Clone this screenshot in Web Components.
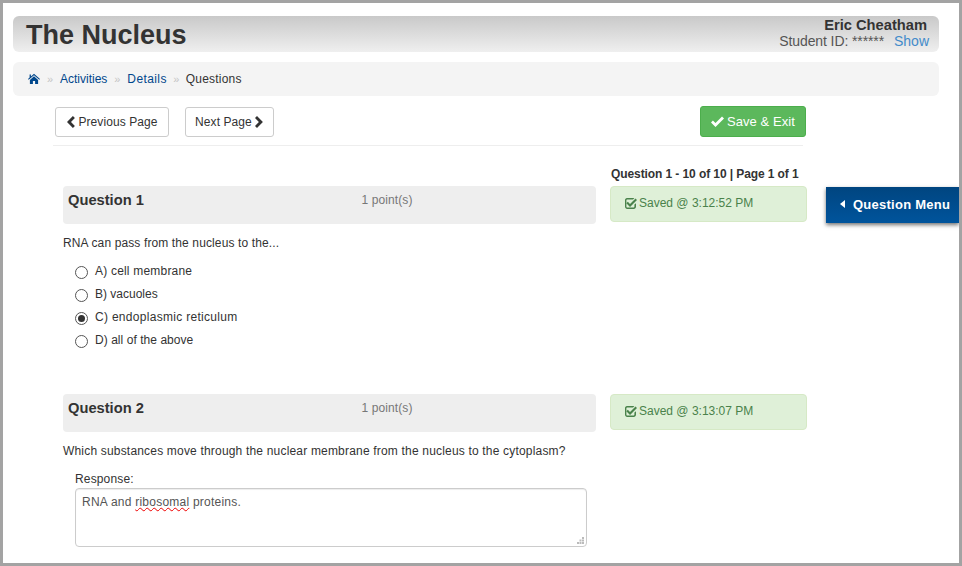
<!DOCTYPE html>
<html lang="en"><head><meta charset="utf-8"><title>The Nucleus</title>
<style>
html,body{margin:0;padding:0;background:#fff}
body{font:12px/17px "Liberation Sans",Arial,sans-serif;color:#333}
</style></head><body>
<x-frame>
  <x-header title="The Nucleus" name="Eric Cheatham" sid="******"></x-header>
  <x-crumbs></x-crumbs>
  <x-toolbar></x-toolbar>
  <x-pageinfo>Question 1 - 10 of 10 | Page 1 of 1</x-pageinfo>
  <x-question num="1" saved="3:12:52 PM" ls=".12" text="RNA can pass from the nucleus to the...">
    <x-option style="letter-spacing:.2px">A) cell membrane</x-option>
    <x-option>B) vacuoles</x-option>
    <x-option checked style="letter-spacing:.3px">C) endoplasmic reticulum</x-option>
    <x-option style="letter-spacing:.05px">D) all of the above</x-option>
  </x-question>
  <x-question num="2" saved="3:13:07 PM" ls=".185" text="Which substances move through the nuclear membrane from the nucleus to the cytoplasm?">
    <x-response></x-response>
  </x-question>
  <x-menutab>Question Menu</x-menutab>
</x-frame>
<script>
const ICONS={
 home:'<path d="M6 .8 2.9 3.5V1.6H1.6v3L0 6l.7.8L6 2.2l5.3 4.6L12 6zM1.9 6.9V11h3V7.9h2.2V11h3V6.9L6 3.3z"/>',
 left:'<path d="M6.9 0 8.9 2 5 6l3.9 4-2 2L1 6z"/>',
 right:'<path d="M3 0 1 2l3.9 4L1 10l2 2 5.9-6z"/>',
 ok:'<path d="M1.9 4.6 0 6.6l4.500 4.300L13 2.500 11 .6 4.500 7z"/>',
 check:'<path d="M2 1h7.400l-1.400 1.400H2.400c-.6 0-1 .4-1 1v6c0 .6.4 1 1 1h6c.6 0 1-.4 1-1V7.600L11 6.200v3.600c0 1.200-1 2.200-2.200 2.200H2.200C1 12 0 11 0 9.800V3.200C0 2 .8 1 2 1z"/><path d="M2.800 4.800 1.300 6.300l3.700 3.700 7-7-1.500-1.500L5 7z"/>'
};
function def(name,css,html){
  customElements.define(name,class extends HTMLElement{
    connectedCallback(){
      if(this.shadowRoot)return;
      const r=this.attachShadow({mode:'open'});
      const h=typeof html==='function'?html(this):html;
      r.innerHTML='<style>'+css+'</style>'+h;
    }
  });
}
def('x-icon',':host{display:inline-flex;vertical-align:middle}svg{display:block;fill:currentColor}',
 e=>{const w=e.getAttribute('w')||12,h=e.getAttribute('h')||12,vw=e.getAttribute('vw')||12;
  return `<svg width="${w}" height="${h}" viewBox="0 0 ${vw} 12">${ICONS[e.getAttribute('name')]}</svg>`});
def('x-frame',`:host{display:block;box-sizing:border-box;width:962px;height:566px;border:3px solid #a3a3a3;position:relative;overflow:hidden;padding:13px 20px 0 10px}`,'<slot></slot>');
def('x-header',`:host{display:flex;justify-content:space-between;height:36px;border-radius:6px;background:linear-gradient(#c9c9c9,#efefef);box-sizing:border-box;padding:0 10px 0 13px;color:#333}
 h1{margin:0;font:bold 27px/38px "Liberation Sans",sans-serif}
 .r{text-align:right;font-size:14px;line-height:16px;padding-top:1px}
 b{display:block;padding-right:2px;font-size:14.700px}
 .id{color:#555;letter-spacing:-.1px}a{color:#428bca;margin-left:6px}`,
 e=>`<h1>${e.getAttribute('title')}</h1><div class="r"><b>${e.getAttribute('name')}</b><span class="id">Student ID: ${e.getAttribute('sid')}</span> <a>Show</a></div>`);
def('x-crumbs',`:host{display:flex;align-items:center;height:34px;margin-top:10px;background:#f4f4f4;border-radius:6px;padding:0 15px;color:#333;font-size:12px}
 a{color:#00478c}.sep{color:#c4c4c4;text-align:center;font-size:11px;width:20px}.s3{width:19px}
 .d{letter-spacing:.4px}.q{letter-spacing:.2px}
 x-icon{color:#00478c}`,
 `<x-icon name="home"></x-icon><span class="sep">»</span><a>Activities</a><span class="sep">»</span><a class="d">Details</a><span class="sep s3">»</span><span class="q">Questions</span>`);
def('x-btn',`:host{display:inline-flex;align-items:center;justify-content:center;box-sizing:border-box;height:30px;border:1px solid #ccc;border-radius:3px;background:#fff;color:#333;font-size:12px;gap:2px;letter-spacing:.08px}
 :host([success]){height:31px;background:#5cb85c;border-color:#4cae4c;color:#fff;font-size:13px;gap:3px}`,'<slot></slot>');
def('x-toolbar',`:host{display:flex;align-items:flex-end;box-sizing:border-box;border-bottom:1px solid #eee;margin:0 0 0 40px;padding:0 0 8px 2px;width:750px;height:50px}
 x-btn.p{width:114px}x-btn.n{width:89px;margin-left:16px}x-btn.s{width:106px;margin-left:auto;margin-right:-3px}`,
 `<x-btn class="p"><x-icon name="left" w="10" vw="10"></x-icon>Previous Page</x-btn><x-btn class="n">Next Page<x-icon name="right" w="10" vw="10"></x-icon></x-btn><x-btn class="s" success><x-icon name="ok" w="13" vw="13"></x-icon>Save &amp; Exit</x-btn>`);
def('x-pageinfo',`:host{display:block;font-weight:bold;font-size:12px;line-height:17px;margin:20px 0 0 598px;height:20px;white-space:nowrap;letter-spacing:-.09px}`,'<slot></slot>');
def('x-question',`:host{display:grid;grid-template-columns:533px 197px;column-gap:14px;margin-left:50px;height:208px;align-content:start}
 .bar{height:38px;background:#eee;border-radius:4px;display:grid;grid-template-columns:1fr 1fr;padding:0 5px;box-sizing:border-box}
 .bar b{font-size:14.700px;line-height:28px;color:#333}
 .bar span{color:#777;line-height:28px;padding-left:32px;letter-spacing:.1px}
 .saved{height:36px;box-sizing:border-box;background:#dff0d8;border:1px solid #d6e9c6;border-radius:4px;color:#4a824b;padding:8px 14px;display:flex;gap:2px;align-items:flex-start;white-space:nowrap}
 .saved x-icon{margin-top:2px}
 .body{grid-column:1/3}
 p{margin:11px 0 8px;line-height:17px}
 .opts{display:flex;flex-direction:column;padding-left:12px}`,
 e=>`<div class="bar"><b>Question ${e.getAttribute('num')}</b><span>1 point(s)</span></div>
 <div class="saved"><x-icon name="check" w="12" vw="12"></x-icon>Saved @ ${e.getAttribute('saved')}</div>
 <div class="body"><p style="letter-spacing:${e.getAttribute('ls')}px">${e.getAttribute('text')}</p><div class="opts"><slot></slot></div></div>`);
def('x-option',`:host{display:flex;align-items:center;height:23px;gap:7px}
 i{display:block;width:13px;height:13px;box-sizing:border-box;border:1px solid #555;border-radius:50%;margin-top:2px;background:#fff;position:relative}
 :host([checked]) i::after{content:"";position:absolute;left:2px;top:2px;width:7px;height:7px;border-radius:50%;background:#333}
 span{margin-top:-1px}`,`<i></i><span><slot></slot></span>`);
def('x-response',`:host{display:block}
 label{display:block;line-height:17px;margin-top:3px;letter-spacing:.15px}
 .ta{box-sizing:border-box;width:512px;height:59px;border:1px solid #ccc;border-radius:4px;padding:5px 6px;color:#555;position:relative;margin-top:0;letter-spacing:.23px;box-shadow:inset 0 1px 1px rgba(0,0,0,.075)}
 u{text-decoration:underline wavy #e00;text-decoration-thickness:1px;text-underline-offset:1px}
 svg{position:absolute;right:2px;bottom:2px;fill:#bbb}`,
 `<label>Response:</label><div class="ta">RNA and <u>ribosomal</u> proteins.<svg width="7" height="7" viewBox="0 0 7 7"><rect x="5" y="0" width="2" height="2"/><rect x="2.500" y="2.500" width="2" height="2"/><rect x="5" y="2.500" width="2" height="2"/><rect x="0" y="5" width="2" height="2"/><rect x="2.500" y="5" width="2" height="2"/><rect x="5" y="5" width="2" height="2"/></svg></div>`);
def('x-menutab',`:host{position:absolute;left:823px;top:184px;width:133px;height:36px;box-sizing:border-box;background:linear-gradient(#004580,#00549c);color:#fff;font:bold 13px/34px "Liberation Sans",sans-serif;box-shadow:0 2px 4px rgba(0,0,0,.55);display:flex;align-items:center;padding-left:14px;gap:8px;letter-spacing:.25px}
 i{display:block;width:0;height:0;border:4px solid transparent;border-left:0;border-right:5px solid #fff;margin-top:-2px}`,`<i></i><slot></slot>`);
</script>
</body></html>
